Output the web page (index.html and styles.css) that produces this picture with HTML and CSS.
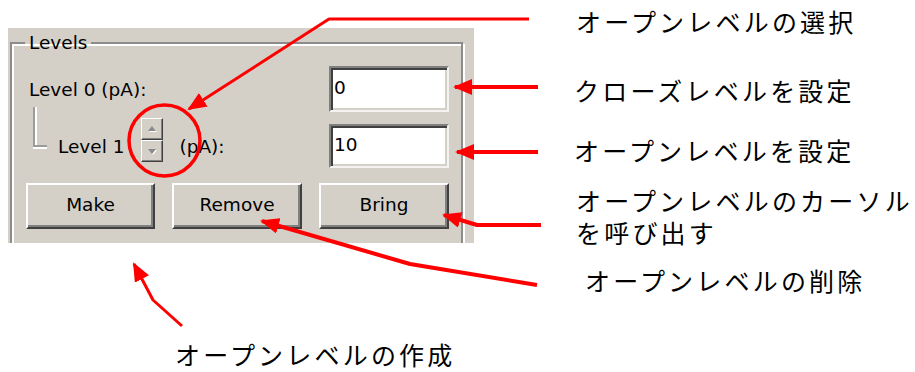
FILE: index.html
```html
<!DOCTYPE html>
<html lang="ja">
<head>
  <meta charset="UTF-8">
  <title>Levels</title>
  <link rel="stylesheet" href="styles.css">
</head>
<body>

<div class="page">
  <div class="left">
    <div class="panel">
      <fieldset class="group">
        <legend>Levels</legend>

        <div class="row row-first">
          <span class="lbl">Level 0 (pA):</span>
          <div class="edit">0</div>
        </div>

        <div class="row row-second">
          <span class="tree"></span>
          <span class="lbl lbl-sub">Level 1</span>
          <span class="spin">
            <span class="spin-btn">
              <svg width="12" height="10" viewBox="0 0 12 10"><path d="M6 2 L10 7 L2 7 Z" fill="#fff" transform="translate(1 1)"/><path d="M6 2 L10 7 L2 7 Z" fill="#8a8a8a"/></svg>
            </span>
            <span class="spin-btn">
              <svg width="12" height="10" viewBox="0 0 12 10"><path d="M2 3 L10 3 L6 8 Z" fill="#fff" transform="translate(1 1)"/><path d="M2 3 L10 3 L6 8 Z" fill="#8a8a8a"/></svg>
            </span>
          </span>
          <span class="lbl lbl-unit">(pA):</span>
          <div class="edit edit-second">10</div>
        </div>

        <div class="row row-buttons">
          <div class="btn">Make</div>
          <div class="btn btn-wide">Remove</div>
          <div class="btn btn-wide">Bring</div>
        </div>
      </fieldset>
    </div>
    <div class="note note-make">オープンレベルの作成</div>
  </div>

  <div class="notes">
    <div class="note note-select">オープンレベルの選択</div>
    <div class="note note-close">クローズレベルを設定</div>
    <div class="note note-open">オープンレベルを設定</div>
    <div class="note note-bring">オープンレベルのカーソル<br>を呼び出す</div>
    <div class="note note-remove">オープンレベルの削除</div>
  </div>

  <!-- callout arrows drawn over the screenshot -->
  <svg class="callouts" width="915" height="372" viewBox="0 0 915 372">
    <defs>
      <marker id="head" markerUnits="userSpaceOnUse" markerWidth="20" markerHeight="16" refX="17" refY="8" orient="auto">
        <path d="M0 0 L19 8 L0 16 Z" fill="#ff0000"/>
      </marker>
    </defs>
    <g fill="none" stroke="#ff0000" stroke-linejoin="round">
      <polyline points="529,19 329,19 189,109" stroke-width="3" marker-end="url(#head)"/>
      <line x1="538" y1="87" x2="455" y2="87" stroke-width="4" marker-end="url(#head)"/>
      <line x1="538" y1="152" x2="457" y2="152" stroke-width="4" marker-end="url(#head)"/>
      <polyline points="541,225 477,225 444,215" stroke-width="4" marker-end="url(#head)"/>
      <polyline points="537,285 410,264 262,221" stroke-width="4" marker-end="url(#head)"/>
      <polyline points="182,326 153,300 134,264" stroke-width="3" marker-end="url(#head)"/>
      <circle cx="164.5" cy="140.5" r="35.5" stroke-width="3.5"/>
    </g>
  </svg>
</div>

</body>
</html>
```

FILE: styles.css
```css
body {
  margin: 0;
  background-color: #fff;
}
.page {
  position: relative;
  display: flex;
  width: 915px;
  height: 372px;
  overflow: hidden;
  background-color: #fff;
}
.left {
  width: 466px;
  padding: 28px 0 0 8px;
}
.panel {
  width: 466px;
  height: 215px;
  box-sizing: border-box;
  padding-left: 2px;
  background-color: #d4d0c8;
  overflow: hidden;
  font-family: "DejaVu Sans", sans-serif;
  font-size: 18.5px;
  color: #000;
}
.group {
  box-sizing: border-box;
  width: 453px;
  height: 260px;
  margin: 5px 0 0 0;
  padding: 13px 12px 0 14px;
  border: 2px solid #8c8c8c;
  box-shadow: inset 2px 2px 0 #fff, 2px 2px 0 #fff;
  min-width: 0;
}
.group legend {
  margin-left: -1px;
  padding: 0 4px;
  line-height: 20px;
}
.row {
  display: flex;
  align-items: center;
}
.row-first {
  height: 46px;
}
.row-second {
  height: 44px;
  margin-top: 12px;
}
.row-buttons {
  height: 46px;
  margin-top: 15px;
  gap: 17px;
}
.lbl {
  padding-left: 3px;
  white-space: nowrap;
}
.lbl-sub {
  padding-left: 11px;
}
.lbl-unit {
  padding-left: 16px;
}
.tree {
  align-self: flex-start;
  width: 12px;
  height: 38px;
  margin: -17px 0 0 7px;
  border-left: 2px solid #9c9c9c;
  border-bottom: 2px solid #9c9c9c;
  box-shadow: inset 2px 0 0 #fff, 0 2px 0 #fff;
}
.edit {
  box-sizing: border-box;
  width: 120px;
  height: 46px;
  margin-left: auto;
  padding: 8px 0 0 3px;
  line-height: 24px;
  background-color: #fff;
  border: 2px solid;
  border-color: #808080 #f4f3f0 #f4f3f0 #808080;
  box-shadow: inset 2px 2px 0 #404040, inset -2px -2px 0 #d4d0c8;
}
.edit-second {
  height: 44px;
  padding-top: 7px;
}
.spin {
  align-self: flex-start;
  display: flex;
  flex-direction: column;
  width: 22px;
  margin: -6px 0 0 17px;
}
.spin-btn {
  box-sizing: border-box;
  display: flex;
  align-items: center;
  justify-content: center;
  height: 22px;
  border: 1px solid;
  border-color: #fff #404040 #404040 #fff;
  box-shadow: inset -1px -1px 0 #808080;
  background-color: #d4d0c8;
}
.btn {
  box-sizing: border-box;
  display: flex;
  align-items: center;
  justify-content: center;
  width: 130px;
  height: 46px;
  padding-bottom: 3px;
  border: 2px solid;
  border-color: #fff #404040 #404040 #fff;
  box-shadow: inset -2px -2px 0 #808080;
  background-color: #d4d0c8;
}
.btn-wide {
  width: 131px;
}
.notes {
  padding-left: 100px;
}
.note {
  font-family: "Noto Sans CJK JP", sans-serif;
  font-size: 25px;
  line-height: 32px;
  letter-spacing: 3.2px;
  color: #000;
  white-space: nowrap;
}
.note-select {
  margin-top: 5px;
  padding-left: 2px;
}
.note-close {
  margin-top: 37px;
}
.note-open {
  margin-top: 28px;
}
.note-bring {
  margin-top: 18px;
  padding-left: 2px;
}
.note-remove {
  margin-top: 16px;
  padding-left: 11px;
}
.note-make {
  margin-top: 95px;
  padding-left: 167px;
}
.callouts {
  position: absolute;
  top: 0;
  left: 0;
  pointer-events: none;
}
```
